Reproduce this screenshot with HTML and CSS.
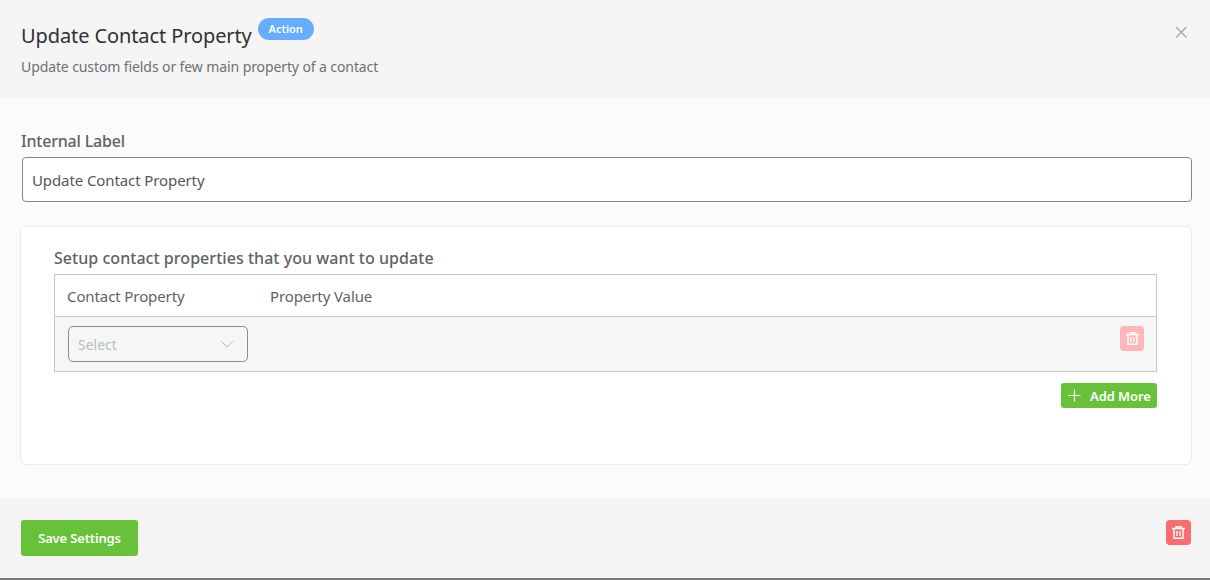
FILE: index.html
```html
<!DOCTYPE html>
<html lang="en">
<head>
<meta charset="utf-8">
<title>Update Contact Property</title>
<link rel="stylesheet" href="styles.css">
</head>
<body>
<div class="dialog">
  <header class="head">
    <div class="head-main">
      <div class="title-row">
        <h1 class="title">Update Contact Property</h1>
        <span class="badge">Action</span>
      </div>
      <p class="sub">Update custom fields or few main property of a contact</p>
    </div>
    <button class="close" aria-label="Close">
      <svg width="14" height="14" viewBox="0 0 14 14"><path d="M2 2l10.500 10.500M12.500 2L2 12.500" stroke="#a3a6ad" stroke-width="1.300" fill="none"/></svg>
    </button>
  </header>
  <main class="body">
    <label class="field-label">Internal Label</label>
    <div class="input">Update Contact Property</div>
    <section class="card">
      <h2 class="card-title">Setup contact properties that you want to update</h2>
      <div class="table">
        <div class="thead">
          <span class="th-one">Contact Property</span>
          <span>Property Value</span>
        </div>
        <div class="trow">
          <div class="select">
            <span>Select</span>
            <svg width="14" height="8" viewBox="0 0 14 8"><path d="M1 1l6 6 6-6" stroke="#b9bcc2" stroke-width="1" fill="none"/></svg>
          </div>
          <button class="trash trash-light" aria-label="Delete">
            <svg width="13" height="13" viewBox="0 0 13 13"><path d="M0 2.500h13M4 2.500V0.700h5V2.500M2 2.500v9.800h9V2.500M5 5v5M8 5v5" stroke="#fff" stroke-width="1.400" fill="none"/></svg>
          </button>
        </div>
      </div>
      <div class="add-row">
        <button class="add">
          <svg width="13" height="13" viewBox="0 0 13 13"><path d="M6.500 0.500v12M0.500 6.500h12" stroke="#fff" stroke-width="1.200" fill="none"/></svg>
          <span>Add More</span>
        </button>
      </div>
    </section>
  </main>
  <footer class="foot">
    <button class="save">Save Settings</button>
    <button class="trash trash-strong" aria-label="Delete">
      <svg width="13" height="13" viewBox="0 0 13 13"><path d="M0 2.500h13M4 2.500V0.700h5V2.500M2 2.500v9.800h9V2.500M5 5v5M8 5v5" stroke="#fff" stroke-width="1.400" fill="none"/></svg>
    </button>
  </footer>
</div>
</body>
</html>
```

FILE: styles.css
```css
* { box-sizing: border-box; }
html, body { margin: 0; padding: 0; }
body {
  width: 1210px;
  height: 580px;
  overflow: hidden;
  font-family: "Noto Sans", "Open Sans", sans-serif;
  color: #606266;
  background: #fff;
}
button { font-family: inherit; border: 0; padding: 0; cursor: pointer; }
.dialog {
  height: 580px;
  display: flex;
  flex-direction: column;
  border-bottom: 2px solid #7a7a7a;
}
.head {
  height: 98px;
  flex: none;
  background: #f5f5f5;
  padding: 18px 22px 0 21px;
  display: flex;
  justify-content: space-between;
}
.title-row { display: flex; align-items: flex-start; height: 36px; }
.title {
  margin: 4px 0 0;
  font-size: 20px;
  line-height: 27px;
  font-weight: 400;
  color: #303133;
  letter-spacing: -0.1px;
}
.badge {
  margin-left: 6px;
  height: 22px;
  width: 56px;
  border-radius: 11px;
  background: #66adff;
  color: #fff;
  font-size: 11px;
  font-weight: 600;
  line-height: 22px;
  text-align: center;
}
.sub {
  margin: 3px 0 0;
  font-size: 14px;
  line-height: 19px;
  color: #6e7075;
  letter-spacing: -0.1px;
}
.close {
  background: none;
  width: 14px;
  height: 14px;
  margin-top: 7px;
  display: block;
}
.close svg { display: block; }
.body {
  height: 400px;
  flex: none;
  background: #fbfbfb;
  padding: 32px 18px 0 20px;
}
.field-label {
  display: block;
  padding-left: 1px;
  font-size: 16px;
  line-height: 22px;
  font-weight: 500;
  color: #606266;
  letter-spacing: -0.2px;
}
.input {
  margin: 5px 0 0 2px;
  height: 45px;
  border: 1px solid #84868b;
  border-radius: 4px;
  background: #fff;
  padding: 0 9px;
  font-size: 15px;
  line-height: 45px;
  color: #55575c;
  letter-spacing: -0.1px;
}
.card {
  margin-top: 24px;
  height: 239px;
  background: #fff;
  border: 1px solid #e9ecef;
  border-radius: 6px;
  padding: 20px 34px 0 33px;
}
.card-title {
  margin: 0;
  font-size: 16px;
  line-height: 22px;
  font-weight: 500;
  color: #606266;
  letter-spacing: 0.04px;
}
.table {
  margin-top: 5px;
  border: 1px solid #c4c6cb;
}
.thead {
  height: 42px;
  display: flex;
  align-items: center;
  padding-left: 12px;
  font-size: 15px;
  color: #606266;
  background: #fff;
  border-bottom: 1px solid #c4c6cb;
  letter-spacing: -0.1px;
}
.th-one { width: 203px; }
.trow {
  height: 54px;
  background: #f5f7f6;
  display: flex;
  justify-content: space-between;
  align-items: flex-start;
  padding: 9px 12px 0 13px;
}
.select {
  width: 180px;
  height: 36px;
  border: 1px solid #8a8c91;
  border-radius: 5px;
  display: flex;
  align-items: center;
  justify-content: space-between;
  padding: 0 13px 0 9px;
  font-size: 14px;
  color: #b9bcc2;
}
.trash {
  width: 24px;
  height: 25px;
  border-radius: 4px;
  display: flex;
  align-items: center;
  justify-content: center;
}
.trash-light { background: #ffb6b9; }
.trash-strong { background: #f96c6f; width: 25px; }
.add-row { display: flex; justify-content: flex-end; margin-top: 11px; }
.add {
  width: 96px;
  height: 25px;
  background: #67c23a;
  border-radius: 3px;
  color: #fff;
  font-size: 13px;
  font-weight: 600;
  display: flex;
  align-items: center;
  padding-left: 7px;
  gap: 9px;
  letter-spacing: -0.1px;
}
.foot {
  flex: 1;
  background: #f5f5f5;
  padding: 22px 19px 0 21px;
  display: flex;
  justify-content: space-between;
  align-items: flex-start;
}
.save {
  width: 117px;
  height: 36px;
  border-radius: 3px;
  background: #67c23a;
  color: #fff;
  font-size: 13px;
  font-weight: 600;
  letter-spacing: -0.15px;
}
```
